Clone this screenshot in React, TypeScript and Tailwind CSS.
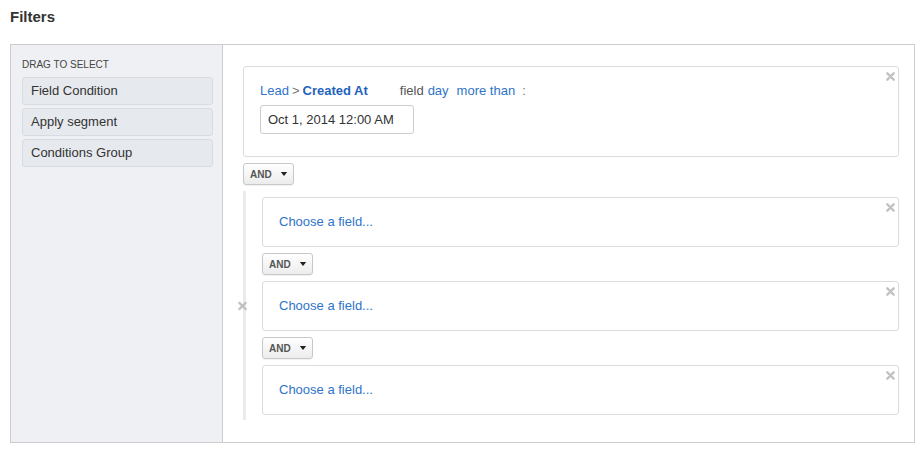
import React from 'react';

const font = { fontFamily: '"Liberation Sans", Arial, sans-serif' };

const CloseMark: React.FC<{ className?: string }> = ({ className = '' }) => (
  <svg viewBox="0 0 10 10" className={`h-[9px] w-[9px] ${className}`}>
    <path d="M1.5 1.5 L8.5 8.5 M8.5 1.5 L1.5 8.5" stroke="#c2c2c2" strokeWidth="2.6" strokeLinecap="round" />
  </svg>
);

const AndButton: React.FC = () => (
  <div className="flex h-[22px] w-[51px] items-center gap-[8px] rounded-[3px] border border-[#c8c8c8] bg-gradient-to-b from-[#ffffff] to-[#ececec] pl-[6px] shadow-[0_1px_1px_rgba(0,0,0,0.06)]">
    <span className="text-[10px] font-bold text-[#555]">AND</span>
    <svg viewBox="0 0 8 5" className="h-[4px] w-[8px]">
      <path d="M0 0 L8 0 L4 5 Z" fill="#222" />
    </svg>
  </div>
);

const ChooseCard: React.FC = () => (
  <div className="relative flex h-[50px] items-center rounded-[3px] border border-[#dcdcdc] bg-white pl-[16px]">
    <span className="text-[13px] text-[#2f74c9]">Choose a field...</span>
    <CloseMark className="absolute right-[3px] top-[5px]" />
  </div>
);

const palette = ['Field Condition', 'Apply segment', 'Conditions Group'];

export default function App() {
  return (
    <div className="min-h-[452px] w-[922px] bg-white pl-[10px] pt-[7px]" style={font}>
      <h1 className="text-[15px] font-bold leading-[20px] text-[#333]">Filters</h1>
      <div className="mt-[17px] flex h-[399px] w-[905px] border border-[#cccccc]">
        <div className="w-[212px] shrink-0 border-r border-[#cccccc] bg-[#eef0f3] pl-[11px] pr-[9px] pt-[14px]">
          <div className="text-[10px] leading-[12px] text-[#444]">DRAG TO SELECT</div>
          <div className="mt-[6px] flex flex-col gap-[3px]">
            {palette.map((item) => (
              <div
                key={item}
                className="flex h-[28px] items-center rounded-[3px] border border-[#d8dce1] bg-[#e6e9ed] pl-[8px] text-[13px] text-[#333]"
              >
                {item}
              </div>
            ))}
          </div>
        </div>
        <div className="flex-1 pl-[20px] pr-[15px] pt-[21px]">
          <div className="relative h-[91px] rounded-[3px] border border-[#dcdcdc] bg-white pl-[16px] pt-[16px]">
            <div className="flex items-center text-[13px] leading-[16px]">
              <span className="text-[#2f74c9]">Lead</span>
              <span className="ml-[3px] text-[#777]">&gt;</span>
              <span className="ml-[3px] font-bold text-[#1f63bd]">Created At</span>
              <span className="ml-[32px] text-[#555]">field</span>
              <span className="ml-[4px] text-[#2f74c9]">day</span>
              <span className="ml-[8px] text-[#2f74c9]">more than</span>
              <span className="ml-[7px] text-[#777]">:</span>
            </div>
            <div className="mt-[6px] flex h-[29px] w-[154px] items-center rounded-[3px] border border-[#cccccc] pl-[7px] text-[13px] text-[#333]">
              Oct 1, 2014 12:00 AM
            </div>
            <CloseMark className="absolute right-[3px] top-[5px]" />
          </div>
          <div className="mt-[6px]">
            <AndButton />
          </div>
          <div className="relative mt-[6px] flex flex-col gap-[6px] border-l-[3px] border-[#ebebeb] pb-[5px] pt-[6px] pl-[16px]">
            <ChooseCard />
            <AndButton />
            <ChooseCard />
            <AndButton />
            <ChooseCard />
            <div className="absolute left-[-8px] top-1/2 -translate-y-1/2">
              <CloseMark />
            </div>
          </div>
        </div>
      </div>
    </div>
  );
}
